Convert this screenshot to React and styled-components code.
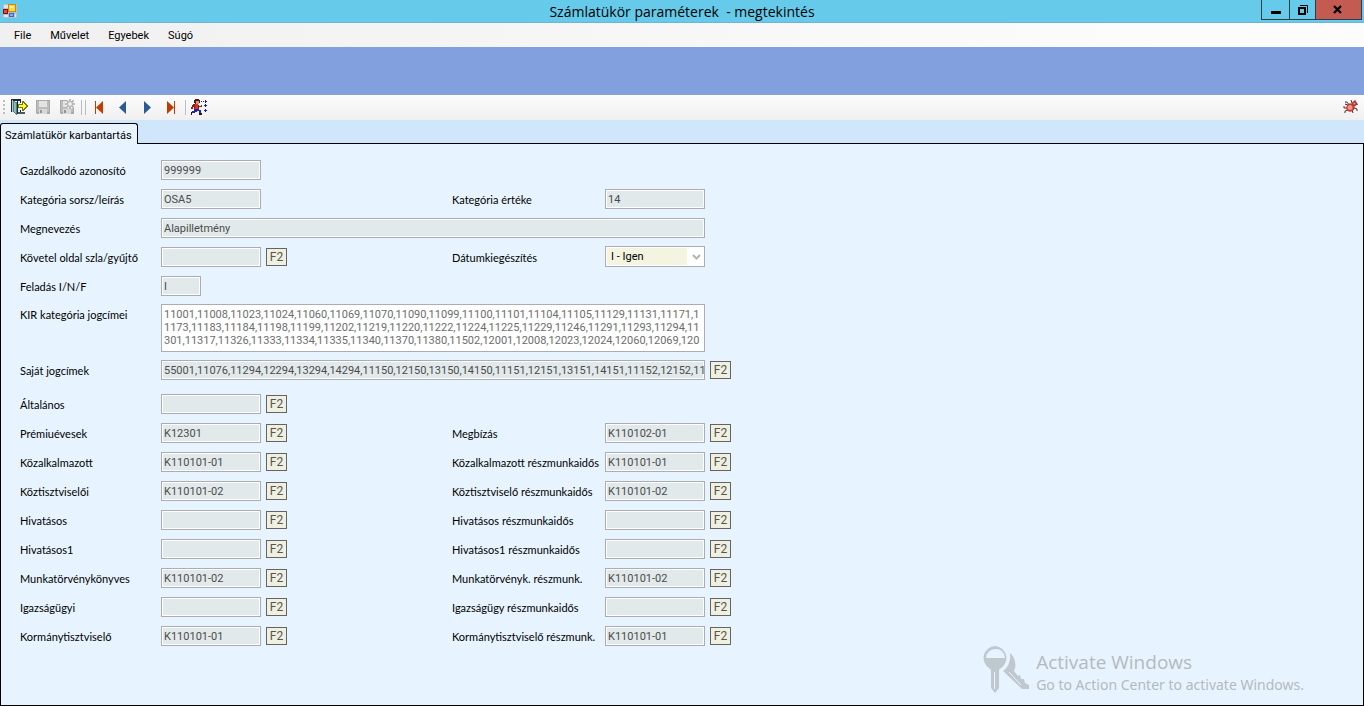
import React from 'react';
import styled, { createGlobalStyle } from 'styled-components';

const Global = createGlobalStyle`
  * { box-sizing: border-box; }
  html, body, #root { height: 100%; }
  body { margin: 0; background: #e7f4ff; color: #000; font: 11px/13px Roboto, "Liberation Sans", sans-serif; }
  button, input, select, textarea { font: inherit; border-radius: 0; margin: 0; }
  svg { display: block; }
`;

const Window = styled.div`
  min-height: 100vh;
  display: flex;
  flex-direction: column;
`;

const TitleBar = styled.header`
  display: grid;
  grid-template-columns: 103px 1fr 103px;
  height: 23px;
  background: #66cbea;
  border-bottom: 1px solid #6fb4d2;
`;

const TitleIcon = styled.span`
  padding: 4px 3px;
`;

const Title = styled.h1`
  margin: 0;
  text-align: center;
  font: 400 14px/24px "Open Sans", "Noto Sans", sans-serif;
  white-space: pre;
`;

const WindowButtons = styled.div`
  display: flex;
  height: 20px;
  border: 1px solid #2a3f49;
  border-top: 0;
  margin-right: 2px;
`;

const WindowButton = styled.button`
  flex: ${p => p.$grow || 27} 1 0;
  display: grid;
  place-items: center;
  padding: 0;
  border: 0;
  background: ${p => (p.$close ? '#c35b52' : 'transparent')};
  & + & { border-left: 1px solid #2a3f49; }
`;

const MenuBar = styled.nav`
  display: flex;
  gap: 19px;
  height: 24px;
  padding: 0 14px;
  background: linear-gradient(90deg, #f0f0f0, #fcfcfc 85%);
`;

const MenuItem = styled.button`
  padding: 0;
  border: 0;
  background: none;
  color: #000;
`;

const Banner = styled.div`
  height: 48px;
  background: #829fde;
`;

const ToolBar = styled.div`
  display: flex;
  align-items: center;
  height: 25px;
  padding: 0 1px 1px 3px;
  background: linear-gradient(#fcfcfc, #f0f0f0);
`;

const Grip = styled.span`
  width: 2px;
  height: 15px;
  margin-right: 2px;
  background: repeating-linear-gradient(#bdbdbd 0 2px, transparent 2px 4px);
`;

const ToolButton = styled.button`
  width: 24px;
  height: 22px;
  padding: 0;
  display: grid;
  place-items: center;
  border: 0;
  background: none;
  margin-left: ${p => (p.$last ? 'auto' : 0)};
`;

const Separator = styled.span`
  width: 1px;
  height: 15px;
  margin: 0 1px 0 2px;
  background: #bdbdbd;
`;

const TabStrip = styled.div`
  display: flex;
  align-items: flex-end;
  height: 24px;
  background: #cfe6fb;
  border-bottom: 1px solid #000;
`;

const Tab = styled.button`
  height: 21px;
  margin-bottom: -1px;
  padding: 2px 5px 0 4px;
  border: 1px solid #000;
  border-bottom: 0;
  border-radius: 3px 3px 0 0;
  background: #e7f4ff;
  color: #000;
`;

const Page = styled.main`
  flex: 1;
  display: flex;
  flex-direction: column;
  padding: 16px 19px;
  border: 1px solid #000;
  border-top: 0;
  position: relative;
`;

const Section = styled.section`
  display: grid;
  grid-template-columns: 141px 291px 153px 126px;
  grid-auto-rows: minmax(20px, auto);
  row-gap: 9px;
  margin-bottom: ${p => p.$after || 0}px;
`;

const Label = styled.label`
  grid-column: ${p => (p.$right ? 3 : 1)};
  padding-top: 4px;
  font-family: Lato, "Liberation Sans", sans-serif;
  line-height: 14px;
  white-space: nowrap;
`;

const Control = styled.div`
  grid-column: ${p => (p.$wide ? '2 / -1' : 'auto')};
  display: flex;
  align-items: ${p => (p.$bottom ? 'flex-end' : 'center')};
  height: ${p => (p.$tall ? 48 : 20)}px;
  gap: 5px;
`;

const TextField = styled.input`
  width: ${p => p.$width || 100}px;
  height: 20px;
  padding: 0 0 0 2px;
  border: 1px solid #abadb3;
  box-shadow: inset 0 0 0 1px #fff;
  background: #e1e9ea;
  color: #4c4c4c;
`;

const LookupButton = styled.button`
  width: 21px;
  height: 18px;
  padding: 0;
  border: 1px solid #646464;
  background: #f0f0e1;
  color: #555;
  font-size: 12px;
`;

const CodeList = styled.textarea`
  display: block;
  width: 544px;
  height: 48px;
  padding: 3px 2px;
  border: 1px solid #abadb3;
  background: #fff;
  color: #6d6d6d;
  overflow: hidden;
  resize: none;
  word-break: break-all;
`;

const SelectFrame = styled.div`
  position: relative;
  width: 100px;
  height: 21px;
  border: 1px solid #abadb3;
  background: linear-gradient(90deg, #f3f5e1 80px, #fff 80px) content-box, #fff;
  padding: 1px;
`;

const Select = styled.select`
  display: block;
  appearance: none;
  width: 100%;
  height: 17px;
  padding: 0 4px;
  border: 0;
  background: transparent;
  color: #000;
`;

const Chevron = styled.svg`
  position: absolute;
  right: 3px;
  top: 7px;
  pointer-events: none;
`;

const Watermark = styled.aside`
  position: absolute;
  right: 59px;
  bottom: 10px;
  display: flex;
  gap: 7px;
  color: #b3babd;
  font: 14px/20px "Noto Sans", "Open Sans", sans-serif;
  white-space: nowrap;
  pointer-events: none;
`;

const WatermarkText = styled.div`
  padding-top: 4px;
`;

const WatermarkTitle = styled.div`
  font: 19px/26px "Open Sans", "Noto Sans", sans-serif;
`;

const AppIcon = () => (
  <svg width="14" height="14" viewBox="0 0 14 14">
    <path d="M0 0h14v14H0z" fill="#b9bec4" />
    <path d="M1 1h4v3H1zM1 11h4v2H1zM12 10h1v3h-1z" fill="#dfe6ea" />
    <path d="M5 0h8v8H5z" fill="#c58b08" /><path d="M6 1h6v6H6z" fill="#ffd64a" /><path d="M7 2h3v2H7z" fill="#fff0a8" />
    <path d="M0 5h5v5H0z" fill="#8b1005" /><path d="M1 6h3v3H1z" fill="#e7482e" />
    <path d="M6 9h5v4H6z" fill="#3768c4" /><path d="M7 10h3v2H7z" fill="#83abf1" />
  </svg>
);

const ExitIcon = () => (
  <svg width="17" height="16" viewBox="0 0 17 16" shapeRendering="crispEdges">
    <path d="M0 0h10v4H9V2H2v11H0z" fill="#18282c" />
    <path d="M1 1h1v12H1z" fill="#b9c7c8" />
    <path d="M2 2l4 1v13l-4-3z" fill="#4d8288" />
    <path d="M3 3l2 1v10l-2-1z" fill="#8fb8bc" />
    <path d="M6 2h1v13H6zM9 11h1v3H9z" fill="#18282c" />
    <path d="M7 2h2v11H7z" fill="#e9eeee" />
    <path d="M7 13h7v2H7z" fill="#50585a" />
    <path d="M7 5h4V2h1l5 5-5 5h-1V9H7z" fill="#77772a" />
    <path d="M8 6h4V4l3 3-3 3V8H8z" fill="#ffff16" />
  </svg>
);

const SaveIcon = ({ star }) => (
  <svg width="16" height="16" viewBox="0 0 16 16">
    <path d="M1 1h14v14H2l-1-1z" fill="#a9a9a9" />
    <path d="M2 2h12v11H2z" fill="#bcbcbc" />
    <path d="M4 2h8v6H4z" fill="#e3e3e3" />
    <path d="M4 10h8v5H4z" fill="#d9d9d9" />
    <path d="M5 11h2v3H5z" fill="#949494" />
    {star && (
      <>
        <circle cx="11" cy="5" r="5" fill="#f4f4f4" />
        <path d="M11 0v10M6 5h10M7.500 1.500l7 7M14.500 1.500l-7 7" stroke="#aaa" strokeWidth="1.500" />
        <circle cx="11" cy="5" r="2.500" fill="#eee" stroke="#b0b0b0" />
      </>
    )}
  </svg>
);

const ArrowIcon = ({ back, end }) => (
  <svg width="16" height="16" viewBox="0 0 16 16">
    <g transform={back ? 'matrix(-1 0 0 1 16 0)' : undefined} fill={end ? '#c43c00' : '#2b5b91'}>
      <path d={end ? 'M4 2l7 6.500L4 15z' : 'M5 2l7 6.500L5 15z'} />
      {end && <path d="M11 2h1v13h-1z" />}
    </g>
  </svg>
);

const RunnerIcon = () => (
  <svg width="17" height="17" viewBox="0 0 17 17" shapeRendering="crispEdges">
    <path d="M4 0h4v1h1v3H8v1H4V4H3V1h1z" fill="#4b1a0c" />
    <path d="M5 2h3v3H5z" fill="#d29b72" />
    <path d="M2 5h5v1h1v4H3V8H1V6h1z" fill="#8b2018" />
    <path d="M4 5h3v5H4z" fill="#e02a20" />
    <path d="M0 8h2v2H0zM8 7h3v1H8zM10 6h1v1h-1z" fill="#713021" />
    <path d="M3 10h5v1h2v3H8v-2H6v1H4v1H1v-2h2z" fill="#2424a6" />
    <path d="M0 13h1v3H0zM8 14h3v2H8z" fill="#341510" />
    <path d="M8 2h1v1H8zM10 2h1v1h-1zM12 2h1v1h-1zM14 1h1v1h1v1h-1v1h-1zM13 6h1V5h1v1h1v1h-1v1h-1V7h-1zM13 11h1v-1h1v1h1v1h-1v1h-1v-1h-1z" fill="#1a1abc" />
  </svg>
);

const BugIcon = () => (
  <svg width="16" height="16" viewBox="0 0 16 16">
    <path d="M6 6L4 3L2 3M9 4L8 1M12 4V1M12 6l3-1M11 9l3 1v2M9 11l1 3M5 11l-3 1v2M4 9H1V7M5 6L2 5" stroke="#572b2a" fill="none" />
    <circle cx="11.500" cy="4.500" r="2.500" fill="#a0403c" />
    <ellipse cx="7.500" cy="8.500" rx="4.500" ry="4" transform="rotate(-38 7.500 8.500)" fill="#c23a36" />
    <ellipse cx="7" cy="8.500" rx="2.500" ry="2.500" fill="#f0938b" />
    <circle cx="11.500" cy="4.500" r="1" fill="#e88a82" />
  </svg>
);

const KeysIcon = () => (
  <svg width="46" height="50" viewBox="0 0 46 50">
    <path fill="#bfc8cc" fillRule="evenodd" d="M12 1a12 12 0 0 1 6 22l-2 2v18l-4 5-4-5V25l-2-2A12 12 0 0 1 12 1zM12 4a9 9 0 0 0-9 9h19A9 9 0 0 0 12 4zM11 27v17h1V27z" />
    <path fill="#bfc8cc" d="M27 8c5 4 7 12 4 18l4 5 2-1 1 4 3 0 1 4 4 2v4l-7 0L20 26c5-3 8-10 7-18z" />
    <path d="M26 27l12 13" stroke="#e7f4ff" strokeWidth="1" />
  </svg>
);

const slug = text => text.toLowerCase().replace(/[^\p{L}\d]+/gu, '-');

function Field({ label, value = '', right, width, lookup, wide }) {
  const id = slug(label);
  return (
    <>
      <Label htmlFor={id} $right={right}>{label}</Label>
      <Control $wide={wide}>
        <TextField id={id} value={value} readOnly $width={width} />
        {lookup && <LookupButton type="button" aria-label={`${label} F2`}>F2</LookupButton>}
      </Control>
    </>
  );
}

const accounts = [
  ['Általános', ''],
  ['Prémiuévesek', 'K12301', 'Megbízás', 'K110102-01'],
  ['Közalkalmazott', 'K110101-01', 'Közalkalmazott részmunkaidős', 'K110101-01'],
  ['Köztisztviselői', 'K110101-02', 'Köztisztviselő részmunkaidős', 'K110101-02'],
  ['Hivatásos', '', 'Hivatásos részmunkaidős', ''],
  ['Hivatásos1', '', 'Hivatásos1 részmunkaidős', ''],
  ['Munkatörvénykönyves', 'K110101-02', 'Munkatörvényk. részmunk.', 'K110101-02'],
  ['Igazságügyi', '', 'Igazságügy részmunkaidős', ''],
  ['Kormánytisztviselő', 'K110101-01', 'Kormánytisztviselő részmunk.', 'K110101-01'],
];

const kirCodes = '11001,11008,11023,11024,11060,11069,11070,11090,11099,11100,11101,11104,11105,11129,11131,11171,11173,11183,11184,11198,11199,11202,11219,11220,11222,11224,11225,11229,11246,11291,11293,11294,11301,11317,11326,11333,11334,11335,11340,11370,11380,11502,12001,12008,12023,12024,12060,12069,120';
const ownCodes = '55001,11076,11294,12294,13294,14294,11150,12150,13150,14150,11151,12151,13151,14151,11152,12152,11';

export default function App() {
  return (
    <Window>
      <Global />
      <TitleBar>
        <TitleIcon><AppIcon /></TitleIcon>
        <Title>{'Számlatükör paraméterek  - megtekintés'}</Title>
        <WindowButtons>
          <WindowButton $grow={28} aria-label="Minimize">
            <svg width="10" height="10"><path d="M0 6h10v3H0z" /></svg>
          </WindowButton>
          <WindowButton $grow={25} aria-label="Restore">
            <svg width="10" height="10" fill="none" stroke="#000"><path d="M1 3h6v6H1z" strokeWidth="2" /><path d="M2 .5h7.500V8" /></svg>
          </WindowButton>
          <WindowButton $close $grow={46} aria-label="Close">
            <svg width="10" height="10"><path d="M1 1l7 7M8 1l-7 7" stroke="#000" strokeWidth="2.200" /></svg>
          </WindowButton>
        </WindowButtons>
      </TitleBar>
      <MenuBar>
        {['File', 'Művelet', 'Egyebek', 'Súgó'].map(item => <MenuItem key={item}>{item}</MenuItem>)}
      </MenuBar>
      <Banner />
      <ToolBar>
        <Grip />
        <ToolButton aria-label="Exit"><ExitIcon /></ToolButton>
        <ToolButton aria-label="Save"><SaveIcon /></ToolButton>
        <ToolButton aria-label="Save as new"><SaveIcon star /></ToolButton>
        <Separator /><Separator />
        <ToolButton aria-label="First"><ArrowIcon back end /></ToolButton>
        <ToolButton aria-label="Previous"><ArrowIcon back /></ToolButton>
        <ToolButton aria-label="Next"><ArrowIcon /></ToolButton>
        <ToolButton aria-label="Last"><ArrowIcon end /></ToolButton>
        <Separator />
        <ToolButton aria-label="Run"><RunnerIcon /></ToolButton>
        <ToolButton $last aria-label="Report a bug"><BugIcon /></ToolButton>
      </ToolBar>
      <TabStrip>
        <Tab>Számlatükör karbantartás</Tab>
      </TabStrip>
      <Page>
        <Section $after={8}>
          <Field label="Gazdálkodó azonosító" value="999999" />
          <Field label="Kategória sorsz/leírás" value="OSA5" />
          <Field label="Kategória értéke" value="14" right />
          <Field label="Megnevezés" value="Alapilletmény" width={544} wide />
          <Field label="Követel oldal szla/gyűjtő" lookup />
          <Label htmlFor="datum" $right>Dátumkiegészítés</Label>
          <Control $bottom>
            <SelectFrame>
              <Select id="datum" defaultValue="I"><option value="I">I - Igen</option></Select>
              <Chevron width="9" height="7"><path d="M1 1l3.500 3.500L8 1" fill="none" stroke="#b4b4b4" strokeWidth="2" /></Chevron>
            </SelectFrame>
          </Control>
          <Field label="Feladás I/N/F" value="I" width={40} />
        </Section>
        <Section $after={8}>
          <Label htmlFor="kir">KIR kategória jogcímei</Label>
          <Control $wide $tall><CodeList id="kir" value={kirCodes} readOnly /></Control>
        </Section>
        <Section $after={14}>
          <Field label="Saját jogcímek" value={ownCodes} width={544} lookup wide />
        </Section>
        <Section>
          {accounts.map(([left, leftValue, right, rightValue]) => (
            <React.Fragment key={left}>
              <Field label={left} value={leftValue} lookup />
              {right && <Field label={right} value={rightValue} lookup right />}
            </React.Fragment>
          ))}
        </Section>
        <Watermark>
          <KeysIcon />
          <WatermarkText>
            <WatermarkTitle>Activate Windows</WatermarkTitle>
            <div>Go to Action Center to activate Windows.</div>
          </WatermarkText>
        </Watermark>
      </Page>
    </Window>
  );
}
